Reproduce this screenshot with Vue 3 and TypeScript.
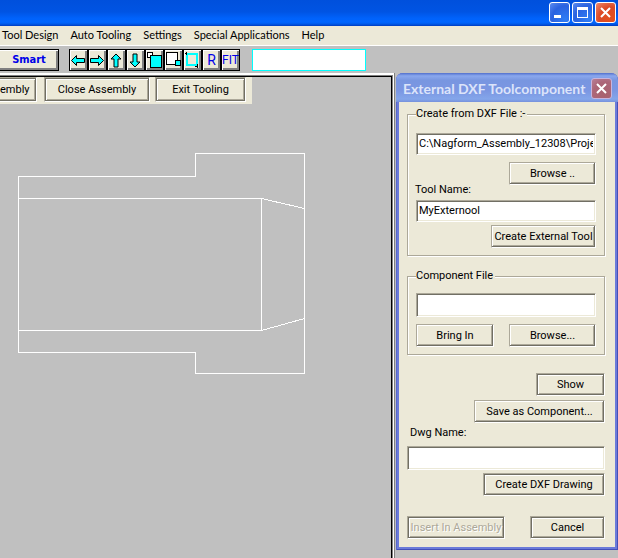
<script setup lang="ts">
import { ref } from 'vue'

const menus: string[] = ['Tool Design', 'Auto Tooling', 'Settings', 'Special Applications', 'Help']

interface Tool {
  id: string
  label: string
  text?: string
}

const tools: Tool[] = [
  { id: 'left', label: 'Pan left' },
  { id: 'right', label: 'Pan right' },
  { id: 'up', label: 'Pan up' },
  { id: 'down', label: 'Pan down' },
  { id: 'zoomIn', label: 'Zoom in' },
  { id: 'zoomOut', label: 'Zoom out' },
  { id: 'window', label: 'Zoom window' },
  { id: 'redraw', label: 'Redraw', text: 'R' },
  { id: 'fit', label: 'Fit', text: 'FIT' },
]

const arrowAngle: Record<string, number> = { left: 0, up: 90, right: 180, down: 270 }

const command = ref('')
const dxfFile = ref('C:\\Nagform_Assembly_12308\\Proje')
const toolName = ref('MyExternool')
const componentFile = ref('')
const dwgName = ref('')
</script>

<template>
  <div class="app">
    <header class="titlebar">
      <button class="winbtn" aria-label="Minimize">
        <svg viewBox="0 0 17 17" width="17" height="17"><rect x="3" y="11" width="7" height="3" fill="#fff" /></svg>
      </button>
      <button class="winbtn" aria-label="Maximize">
        <svg viewBox="0 0 17 17" width="17" height="17" shape-rendering="crispEdges">
          <path d="M3 3h11v11H3zM4 6v7h9V6z" fill="#fff" fill-rule="evenodd" />
        </svg>
      </button>
      <button class="winbtn close" aria-label="Close">
        <svg viewBox="0 0 17 17" width="17" height="17"><path d="M4 4l9 9M13 4l-9 9" stroke="#fff" stroke-width="2" /></svg>
      </button>
    </header>

    <nav class="menubar">
      <a v-for="m in menus" :key="m" href="#">{{ m }}</a>
    </nav>

    <div class="toolbar">
      <button class="smart">Smart</button>
      <div class="tools">
        <button v-for="t in tools" :key="t.id" class="tool" :aria-label="t.label">
          <template v-if="t.text">{{ t.text }}</template>
          <svg v-else viewBox="0 0 17 20" width="17" height="20">
            <path
              v-if="t.id in arrowAngle"
              d="M1.5 10.5L6.5 5.5V8.5H14.5V12.5H6.5V15.5Z"
              fill="#0ff"
              stroke="#000"
              :transform="`rotate(${arrowAngle[t.id]} 8 10.5)`"
            />
            <g v-else-if="t.id === 'zoomIn'" stroke="#000">
              <rect x="1.5" y="2.5" width="5" height="5" fill="#fff" />
              <rect x="4.5" y="5.5" width="11" height="12" fill="#0ff" />
            </g>
            <g v-else-if="t.id === 'zoomOut'" stroke="#000">
              <rect x="1.5" y="2.5" width="11" height="12" fill="#fff" />
              <rect x="10.5" y="10.5" width="5" height="5" fill="#0ff" />
            </g>
            <g v-else fill="none">
              <rect x="3" y="4" width="10" height="11" stroke="#0ff" stroke-width="2" />
              <path d="M1 3.5h2M2.5 2v3M13.5 14v4M11 16.5h3" stroke="#000" />
            </g>
          </svg>
        </button>
      </div>
      <input v-model="command" class="command" aria-label="Command" />
    </div>

    <main class="workspace">
      <section class="viewport">
        <div class="subbar">
          <button class="btn strong cut">embly</button>
          <button class="btn strong close-asm">Close Assembly</button>
          <button class="btn strong exit">Exit Tooling</button>
        </div>
        <svg class="drawing" viewBox="0 0 390 454" width="390" height="454" shape-rendering="crispEdges" aria-label="Component profile">
          <g fill="none" stroke="#fff">
            <path d="M18.5 72.5H195.5V49.5H304.5V269.5H195.5V248.5H18.5Z" />
            <path d="M18.5 94.5H261.5V226.5H18.5M261.5 94.5L304.5 104.5M261.5 226.5L304.5 214.5" />
          </g>
        </svg>
      </section>

      <section class="dialog" role="dialog" aria-labelledby="dialog-title">
        <header class="dialog-title">
          <h1 id="dialog-title">External DXF Toolcomponent</h1>
          <button class="winbtn faded" aria-label="Close dialog">
            <svg viewBox="0 0 17 17" width="17" height="17"><path d="M4 4l9 9M13 4l-9 9" stroke="#fff" stroke-width="2" /></svg>
          </button>
        </header>

        <form class="dialog-body" @submit.prevent>
          <fieldset class="create">
            <legend>Create from DXF File :-</legend>
            <input v-model="dxfFile" class="field" aria-label="DXF file" />
            <button type="button" class="btn browse">Browse ..</button>
            <label for="tool-name">Tool Name:</label>
            <input id="tool-name" v-model="toolName" class="field" />
            <button type="button" class="btn external">Create External Tool</button>
          </fieldset>

          <fieldset class="component">
            <legend>Component File</legend>
            <input v-model="componentFile" class="field tall" aria-label="Component file" />
            <div class="pair">
              <button type="button" class="btn bring">Bring In</button>
              <button type="button" class="btn browse">Browse...</button>
            </div>
          </fieldset>

          <div class="output">
            <button type="button" class="btn strong show">Show</button>
            <button type="button" class="btn save">Save as Component...</button>
            <label for="dwg-name">Dwg Name:</label>
            <input id="dwg-name" v-model="dwgName" class="field tall" />
            <button type="button" class="btn strong dxf">Create DXF Drawing</button>
          </div>

          <footer class="pair">
            <button type="button" class="btn strong insert" disabled>Insert In Assembly</button>
            <button type="button" class="btn strong cancel">Cancel</button>
          </footer>
        </form>
      </section>
    </main>
  </div>
</template>

<style>
body {
  background: #c0c0c0;
}
</style>

<style scoped>
.app {
  display: flex;
  flex-direction: column;
  min-height: 100vh;
  font-family: Roboto, 'Liberation Sans', sans-serif;
  font-size: 11px;
  line-height: 14px;
  color: #000;
  background: #c0c0c0;
}

.app *,
.app {
  box-sizing: border-box;
}

button,
input {
  margin: 0;
  padding: 0;
  border-radius: 0;
  font: inherit;
  color: inherit;
}

.titlebar {
  display: flex;
  justify-content: flex-end;
  gap: 2px;
  height: 26px;
  padding: 2px 2px 0 0;
  background: linear-gradient(#0050dc 0, #0054e3 45%, #0062fb 70%, #0066ff 85%, #005bea 92%, #003cc0 100%);
}

.winbtn {
  display: flex;
  align-items: center;
  justify-content: center;
  width: 21px;
  height: 21px;
  border: 1px solid #fff;
  border-radius: 3px;
  background: radial-gradient(circle at 80% 85%, #2f7df5, #2a62e0 60%, #5c8cf0 100%);
}

.winbtn.close {
  background: radial-gradient(circle at 80% 85%, #e4501c, #dc4a26 55%, #ee8c70 100%);
}

.winbtn.faded {
  border-color: #c8b4dc;
  background: radial-gradient(circle at 70% 80%, #a8626e, #ac6678 60%, #b88098 100%);
}

.menubar {
  display: flex;
  gap: 12px;
  height: 20px;
  padding: 2px 2px 0;
  font-family: Lato, 'Liberation Sans', sans-serif;
  background: #ece9d8;
  border-bottom: 1px solid #fff;
}

.menubar a {
  color: #000;
  text-decoration: none;
  white-space: nowrap;
}

.toolbar {
  display: flex;
  align-items: flex-start;
  height: 27px;
  padding-top: 3px;
}

.smart {
  width: 59px;
  height: 22px;
  border: 1px solid #000;
  border-left: 0;
  background: #ece9d8;
  box-shadow: inset 0 1px #fff, inset -2px -2px #808080;
  color: #0000e8;
  font: bold 11px/14px 'DejaVu Sans Condensed', 'DejaVu Sans', sans-serif;
}

.tools {
  display: flex;
  margin-left: 10px;
}

.tool {
  display: flex;
  align-items: center;
  justify-content: center;
  width: 19px;
  height: 22px;
  border: 1px solid #000;
  background: #ece9d8;
  box-shadow: inset 1px 1px #fff, inset -2px -2px #808080;
  color: #0000e8;
  font-size: 12px;
}

.tool:nth-child(8) {
  font-size: 14px;
}

.command {
  width: 114px;
  height: 22px;
  margin-left: 12px;
  border: 1px solid #0ff;
  background: #fff;
}

.workspace {
  display: flex;
  flex: 1;
  align-items: stretch;
}

.viewport {
  flex: 1;
  min-width: 0;
  margin-right: 2px;
  border-top: 2px solid #fff;
  border-right: 1px solid #fff;
  box-shadow: inset -1px 1px #808080, inset -2px 2px #000, 1px 0 #808080;
  padding-top: 2px;
}

.subbar {
  display: flex;
  width: 252px;
  height: 27px;
  background: #ece9d8;
}

.drawing {
  display: block;
}

.btn {
  height: 23px;
  border: 1px solid;
  border-color: #aca899 #fff #fff #aca899;
  background: #ece9d8;
  box-shadow: inset -1px -1px #716f64, inset 1px 1px #fff, inset -2px -2px #aca899;
  white-space: nowrap;
}

.btn.strong {
  box-shadow: inset 0 0 0 1px #716f64, inset 2px 2px #fff, inset -2px -2px #aca899;
}

.btn:disabled {
  color: #aca899;
  text-shadow: 1px 1px #fff;
}

.subbar .btn {
  height: 25px;
}

.subbar .cut {
  width: 37px;
  padding-right: 10px;
  border-left: 0;
  box-shadow: inset -1px 1px #716f64, inset 0 -1px #716f64, inset 0 2px #fff, inset -2px -2px #aca899;
  text-align: right;
}

.close-asm {
  width: 106px;
  margin-left: 7px;
}

.exit {
  width: 91px;
  margin-left: 5px;
}

.dialog {
  align-self: flex-start;
  width: 222px;
  padding: 0 3px 3px;
  border-radius: 7px 7px 0 0;
  background: #6b7bd9;
  box-shadow: inset 1px 0 #5666cc, inset -1px -1px #4450b8;
}

.dialog-title {
  display: flex;
  align-items: center;
  justify-content: space-between;
  height: 29px;
  margin: 0 -3px;
  padding: 2px 6px 0 7px;
  border-radius: 7px 7px 0 0;
  background: linear-gradient(#5270cc 0, #8aa8ee 10%, #7896e0 25%, #7b96e2 60%, #84a6ea 90%, #7690dc 100%);
}

.dialog-title h1 {
  margin: 0;
  color: #dce4fa;
  font: bold 14px/16px Lato, sans-serif;
  white-space: nowrap;
}

.dialog-body {
  padding: 5px 10px 8px 8px;
  background: #ece9d8;
}

fieldset {
  display: flex;
  flex-direction: column;
  min-width: 0;
  margin: 0;
  padding: 0 8px;
  border: 1px solid #aca899;
  box-shadow: 1px 1px #fff, inset 1px 1px #fff;
}

legend {
  padding: 0 2px 0 0;
  background: #ece9d8;
}

.create {
  height: 149px;
  padding-top: 12px;
}

.component {
  height: 86px;
  margin-top: 13px;
  padding-top: 10px;
}

.field {
  width: 100%;
  height: 22px;
  padding: 0 2px 2px;
  border: 1px solid;
  border-color: #aca899 #fff #fff #aca899;
  background: #fff;
  box-shadow: inset 1px 1px #716f64, inset -1px -1px #ece9d8;
}

.field.tall {
  height: 24px;
}

.create .btn,
.output .btn {
  align-self: flex-end;
}

.browse {
  width: 87px;
}

.create .browse {
  margin-top: 7px;
}

.create label {
  margin: -2px 0 3px -1px;
}

.external {
  width: 105px;
  margin-top: 3px;
}

.pair {
  display: flex;
  justify-content: space-between;
}

.component .pair {
  margin-top: 7px;
}

.bring {
  width: 78px;
}

.output {
  display: flex;
  flex-direction: column;
  margin-top: 18px;
}

.show {
  width: 69px;
}

.save {
  width: 131px;
  margin-top: 4px;
}

.output label {
  margin: 3px 0 6px 3px;
}

.dxf {
  width: 122px;
  margin-top: 3px;
}

footer.pair {
  margin-top: 20px;
}

.insert {
  width: 98px;
}

.cancel {
  width: 75px;
}
</style>
